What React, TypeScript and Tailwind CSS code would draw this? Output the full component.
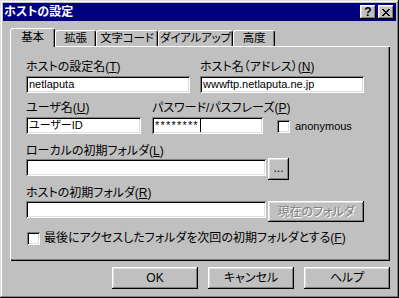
import type { ReactNode } from 'react';
import clsx from 'clsx';

const font = "[font-family:'Liberation_Sans','Noto_Sans_CJK_JP',sans-serif] [font-feature-settings:'palt']";
const raised =
  'shadow-[inset_-1px_-1px_#000,inset_1px_1px_#fff,inset_-2px_-2px_#808080,inset_2px_2px_#dfdfdf]';
const sunken =
  'shadow-[inset_1px_1px_#808080,inset_-1px_-1px_#fff,inset_2px_2px_#000,inset_-2px_-2px_#dfdfdf]';

function Label({ children }: { children: ReactNode }) {
  return <div className="h-[14px] text-[12px] leading-[14px] text-black whitespace-nowrap">{children}</div>;
}

function Input({ children, className }: { children?: ReactNode; className?: string }) {
  return (
    <div className={clsx('flex h-[17px] items-center bg-white px-[3px] text-[11px] text-black', sunken, className)}>
      {children}
    </div>
  );
}

function Check() {
  return <div className={clsx('h-[13px] w-[13px] shrink-0 bg-white', sunken)} />;
}

function Button({
  children,
  className,
  disabled,
}: {
  children: ReactNode;
  className?: string;
  disabled?: boolean;
}) {
  return (
    <div
      className={clsx(
        'flex items-center justify-center whitespace-nowrap bg-[#c0c0c0] text-[12px]',
        raised,
        disabled ? 'text-[#808080] [text-shadow:1px_1px_0_#fff]' : 'text-black',
        className
      )}
    >
      {children}
    </div>
  );
}

function Tab({ label, w, active }: { label: string; w: string; active?: boolean }) {
  return (
    <div
      className={clsx(
        'flex items-center justify-center whitespace-nowrap rounded-t-[3px] border-t border-l border-r border-white border-r-black bg-[#c0c0c0] text-[11.5px] tracking-[-0.2px] shadow-[inset_-1px_0_#808080]',
        w,
        active ? 'relative z-10 -mb-px h-[19px]' : 'h-[16px]'
      )}
    >
      {label}
    </div>
  );
}

export default function App() {
  return (
    <div
      className={clsx(
        'h-[298px] w-[399px] bg-[#c0c0c0] p-[3px] shadow-[inset_-1px_-1px_#000,inset_1px_1px_#dfdfdf,inset_-2px_-2px_#808080,inset_2px_2px_#fff]',
        font
      )}
    >
      {/* title bar */}
      <div className="flex h-[18px] items-center justify-between bg-[#000080] pl-[1px] pr-[2px]">
        <span className="text-[12px] font-bold text-white">ホストの設定</span>
        <div className="flex gap-[2px]">
          <div className={clsx('flex h-[14px] w-[16px] items-center justify-center bg-[#c0c0c0] text-[12px] font-bold leading-none text-black', raised)}>
            ?
          </div>
          <div className={clsx('flex h-[14px] w-[16px] items-center justify-center bg-[#c0c0c0]', raised)}>
            <svg width="8" height="7" viewBox="0 0 8 7" shapeRendering="crispEdges">
              <path d="M0 0h2v1h-2zM6 0h2v1h-2zM1 1h2v1h-2zM5 1h2v1h-2zM2 2h4v1h-4zM3 3h2v1h-2zM2 4h4v1h-4zM1 5h2v1h-2zM5 5h2v1h-2zM0 6h2v1h-2zM6 6h2v1h-2z" fill="#000" />
            </svg>
          </div>
        </div>
      </div>

      <div className="pl-[7px] pt-[7px]">
        {/* tabs */}
        <div className="flex h-[18px] items-end">
          <Tab label="基本" w="w-[45px]" active />
          <Tab label="拡張" w="w-[41px]" />
          <Tab label="文字コード" w="w-[62px]" />
          <Tab label="ダイアルアップ" w="w-[75px]" />
          <Tab label="高度" w="w-[42px]" />
        </div>

        {/* panel */}
        <div className="h-[215px] w-[380px] bg-[#c0c0c0] pl-[16px] pt-[14px] shadow-[inset_1px_1px_#fff,inset_-1px_-1px_#000,inset_-2px_-2px_#808080]">
          <div className="flex gap-[10px]">
            <div className="w-[164px]">
              <Label>
                ホストの設定名(<u>T</u>)
              </Label>
              <Input className="mt-[2px]">netlaputa</Input>
            </div>
            <div className="w-[164px]">
              <Label>
                ホスト名（アドレス）(<u>N</u>)
              </Label>
              <Input className="mt-[2px]">wwwftp.netlaputa.ne.jp</Input>
            </div>
          </div>

          <div className="mt-[8px] flex items-end">
            <div className="w-[115px]">
              <Label>
                ユーザ名(<u>U</u>)
              </Label>
              <Input className="mt-[2px]">ユーザーID</Input>
            </div>
            <div className="ml-[11px] w-[111px]">
              <Label>
                パスワード/パスフレーズ(<u>P</u>)
              </Label>
              <Input className="mt-[2px]">
                <span className="tracking-[1.2px]">********</span>
                <span className="ml-px h-[13px] w-px bg-black" />
              </Input>
            </div>
            <div className="mb-[1px] ml-[14px] flex items-center gap-[5px]">
              <Check />
              <span className="text-[11px] leading-[13px]">anonymous</span>
            </div>
          </div>

          <div className="mt-[10px]">
            <Label>
              ローカルの初期フォルダ(<u>L</u>)
            </Label>
            <div className="flex items-start">
              <Input className="mt-[1px] w-[240px]" />
              <Button className="ml-[2px] h-[22px] w-[21px] pb-[3px] text-[11px]">...</Button>
            </div>
          </div>

          <div className="mt-[6px]">
            <Label>
              ホストの初期フォルダ(<u>R</u>)
            </Label>
            <div className="mt-[1px] flex items-start">
              <Input className="w-[240px]" />
              <Button className="ml-[2px] h-[21px] w-[96px]" disabled>
                現在のフォルダ
              </Button>
            </div>
          </div>

          <div className="mt-[10px] ml-[1px] flex items-center gap-[4px]">
            <Check />
            <span className="text-[12px] leading-[13px]">
              最後にアクセスしたフォルダを次回の初期フォルダとする(<u>F</u>)
            </span>
          </div>
        </div>

        {/* buttons */}
        <div className="mt-[6px] flex w-[380px] justify-end gap-[10px]">
          <Button className="h-[22px] w-[86px]">OK</Button>
          <Button className="h-[22px] w-[86px]">キャンセル</Button>
          <Button className="h-[22px] w-[86px]">ヘルプ</Button>
        </div>
      </div>
    </div>
  );
}
